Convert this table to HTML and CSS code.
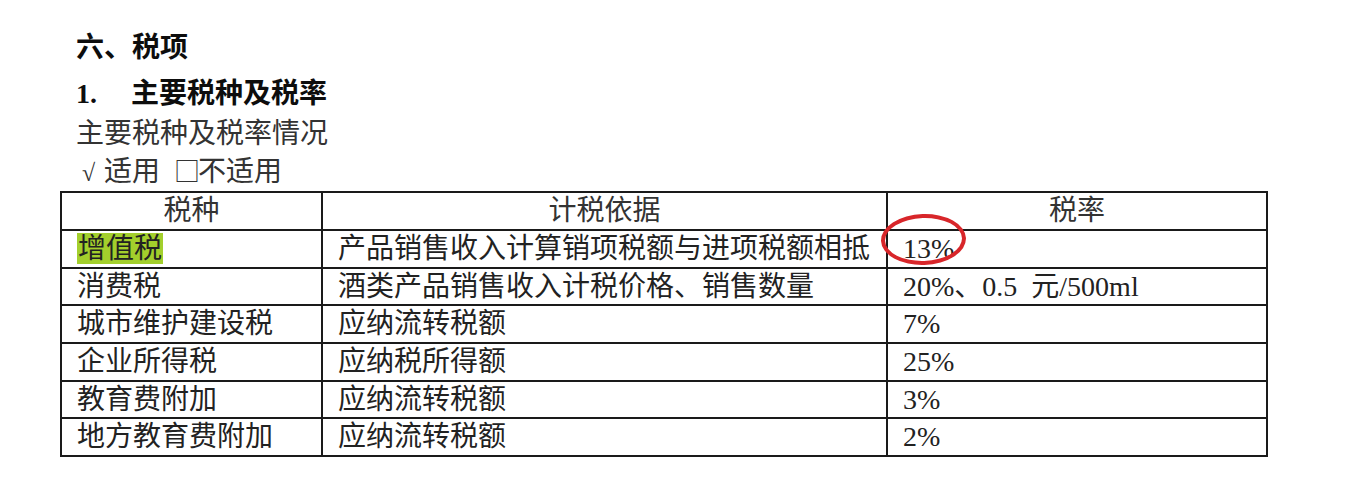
FILE: index.html
```html
<!DOCTYPE html>
<html lang="zh-CN">
<head>
<meta charset="utf-8">
<title>六、税项</title>
<link rel="stylesheet" href="styles.css">
</head>
<body>
<div class="doc">
  <h1 class="h1">六、税项</h1>
  <h2 class="h2"><span class="num">1.</span>主要税种及税率</h2>
  <p class="line">主要税种及税率情况</p>
  <p class="line check"><span class="tick">√</span>适用<span class="box">□</span>不适用</p>
  <table class="tax">
    <colgroup>
      <col class="c1"><col class="c2"><col class="c3">
    </colgroup>
    <thead>
      <tr><th>税种</th><th>计税依据</th><th>税率</th></tr>
    </thead>
    <tbody>
      <tr><td><span class="hl">增值税</span></td><td>产品销售收入计算销项税额与进项税额相抵</td><td class="circled">13%<span class="ring"></span></td></tr>
      <tr><td>消费税</td><td>酒类产品销售收入计税价格、销售数量</td><td>20%、0.5&nbsp; 元/500ml</td></tr>
      <tr><td>城市维护建设税</td><td>应纳流转税额</td><td>7%</td></tr>
      <tr><td>企业所得税</td><td>应纳税所得额</td><td>25%</td></tr>
      <tr><td>教育费附加</td><td>应纳流转税额</td><td>3%</td></tr>
      <tr><td>地方教育费附加</td><td>应纳流转税额</td><td>2%</td></tr>
    </tbody>
  </table>
</div>
</body>
</html>
```
FILE: styles.css
```css
html, body {
  margin: 0;
  padding: 0;
  background: #ffffff;
}
body {
  font-family: "Liberation Serif", "Noto Sans CJK SC", serif;
  color: #222222;
  font-size: 28px;
}
.doc {
  padding-top: 28px;
}
.h1, .h2 {
  margin: 0;
  padding-left: 76px;
  font-size: 28px;
  font-weight: bold;
  line-height: 40px;
  color: #0d0d0d;
}
.h2 {
  margin-top: 6px;
}
.num {
  display: inline-block;
  width: 55px;
}
.line {
  margin: 0;
  padding-left: 76px;
  line-height: 36px;
  color: #333333;
}
.line:first-of-type {
  margin-top: 2px;
}
.check {
  padding-left: 82px;
}
.tick {
  display: inline-block;
  width: 22px;
  font-size: 24px;
}
.box {
  display: inline-block;
  margin-left: 14px;
  width: 24px;
  font-family: "Noto Sans CJK SC", sans-serif;
  font-size: 26px;
}
.tax {
  margin: 0 0 0 60px;
  width: 1206px;
  border-collapse: collapse;
  table-layout: fixed;
}
.c1 { width: 261px; }
.c2 { width: 565px; }
.c3 { width: 380px; }
.tax th, .tax td {
  border: 2px solid #1a1a1a;
  height: 35.7px;
  padding: 0 0 0 15px;
  font-weight: normal;
  line-height: 34px;
  text-align: left;
  color: #222222;
  white-space: nowrap;
}
.tax th {
  height: 36px;
  text-align: center;
  padding: 0;
  color: #333333;
}
.hl {
  background: #a3cf2c;
  padding: 0 1px;
}
.circled {
  position: relative;
}
.ring {
  position: absolute;
  left: -7px;
  top: -17px;
  width: 77px;
  height: 43px;
  border: 4.5px solid #d8262a;
  border-radius: 50%;
  transform: rotate(-2deg);
}
```
